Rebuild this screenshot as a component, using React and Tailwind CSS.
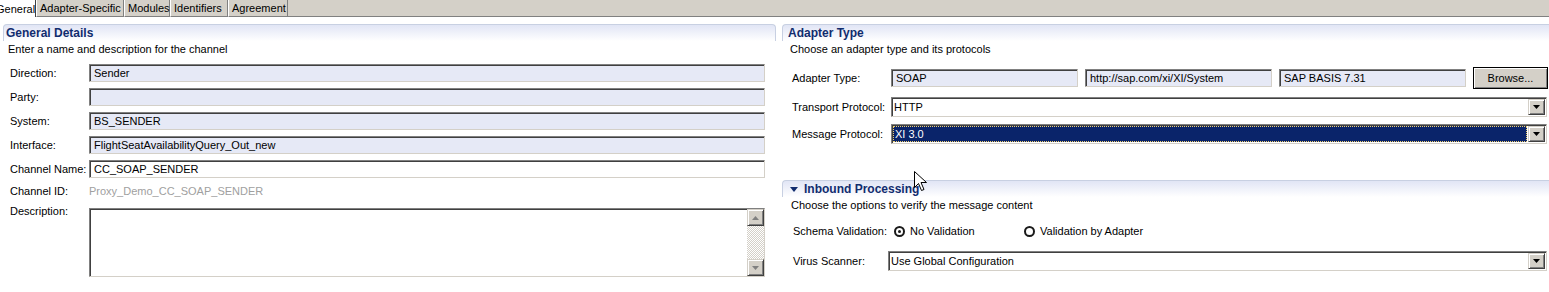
import React from "react";

const sunken =
  "border-t border-l border-b border-r border-t-[#808080] border-l-[#808080] border-b-[#d4d0c8] border-r-[#d4d0c8] shadow-[inset_1px_1px_0_#404040]";

function Field({ children, white, className = "" }) {
  return (
    <div
      className={`${sunken} flex items-center pl-[4px] overflow-hidden whitespace-nowrap ${
        white ? "bg-white" : "bg-[#e6e9f6]"
      } ${className}`}
    >
      {children}
    </div>
  );
}

function DropBtn() {
  return (
    <div className="w-[17px] h-[16px] shrink-0 bg-[#d4d0c8] border border-t-[#d4d0c8] border-l-[#d4d0c8] border-b-[#404040] border-r-[#404040] shadow-[inset_1px_1px_0_#ffffff,inset_-1px_-1px_0_#808080] flex items-center justify-center">
      <svg width="7" height="4" viewBox="0 0 7 4">
        <path d="M0 0h7L3.5 4z" fill="#000" />
      </svg>
    </div>
  );
}

function Select({ children, className = "", focused }) {
  return (
    <div className={`${sunken} bg-white flex items-center h-[20px] pr-[1px] ${className}`}>
      {focused ? (
        <div className="flex-1 h-full p-[1px]">
          <div className="h-full bg-[#0a246a] text-white outline-1 outline-dotted outline-[#f0d070] -outline-offset-1 flex items-center pl-[2px] whitespace-nowrap">
            {children}
          </div>
        </div>
      ) : (
        <div className="flex-1 pl-[2px] whitespace-nowrap">{children}</div>
      )}
      <DropBtn />
    </div>
  );
}

function SectionHeader({ children, className = "" }) {
  return (
    <div
      className={`h-[17px] rounded-t-[4px] border-t border-x border-[#c8d0e2] bg-linear-to-b from-[#e1e5f5] to-white flex items-center font-bold text-[#112c6e] text-[12px] ${className}`}
    >
      {children}
    </div>
  );
}

function ScrollBtn({ up }) {
  return (
    <div className="w-[17px] h-[17px] bg-[#d4d0c8] border border-t-[#d4d0c8] border-l-[#d4d0c8] border-b-[#404040] border-r-[#404040] shadow-[inset_1px_1px_0_#ffffff,inset_-1px_-1px_0_#808080] flex items-center justify-center">
      <svg width="7" height="4" viewBox="0 0 7 4">
        {up ? <path d="M3.5 0L7 4H0z" fill="#808080" /> : <path d="M0 0h7L3.5 4z" fill="#808080" />}
      </svg>
    </div>
  );
}

function Radio({ checked }) {
  return (
    <div className="w-[11px] h-[11px] rounded-full border-2 border-[#1a1a1a] bg-white flex items-center justify-center shrink-0">
      {checked && <div className="w-[3px] h-[3px] rounded-full bg-[#1a1a1a]" />}
    </div>
  );
}

function Row({ label, children }) {
  return (
    <div className="flex items-center h-[18px]">
      <div className="w-[79px] shrink-0">{label}</div>
      {children}
    </div>
  );
}

export default function App() {
  const tabs = [
    { t: "Adapter-Specific", w: "w-[88px]" },
    { t: "Modules", w: "w-[46px]" },
    { t: "Identifiers", w: "w-[58px]" },
    { t: "Agreement", w: "w-[60px]" },
  ];
  return (
    <div className="relative w-[1549px] h-[292px] bg-white overflow-hidden text-[11px] leading-[14px] text-black font-['Liberation_Sans',Arial,sans-serif]">
      {/* Tab bar */}
      <div className="flex h-[17px] bg-[#d4d0c8]">
        <div className="w-[37px] h-[17px] bg-white border-r border-r-[#404040] flex items-center -ml-[1px] pl-0 whitespace-nowrap overflow-hidden">
          <span className="-ml-[3px]">General</span>
        </div>
        {tabs.map((tb) => (
          <div
            key={tb.t}
            className={`${tb.w} h-[17px] border-l border-l-white border-r border-r-[#808080] border-b border-b-[#808080] flex items-center pl-[3px] whitespace-nowrap`}
          >
            {tb.t}
          </div>
        ))}
        <div className="flex-1 border-b border-b-[#808080]" />
      </div>

      <div className="flex pt-[7px]">
        {/* Left column */}
        <div className="w-[773px] ml-[3px] shrink-0">
          <SectionHeader className="pl-[2px]">General Details</SectionHeader>
          <div className="pl-[5px] h-[16px] leading-[16px]">Enter a name and description for the channel</div>
          <div className="pl-[7px] mt-[7px] flex flex-col">
            <div className="flex flex-col gap-[6px]">
              <Row label="Direction:">
                <Field className="w-[676px] h-[18px]">Sender</Field>
              </Row>
              <Row label="Party:">
                <Field className="w-[676px] h-[18px]" />
              </Row>
              <Row label="System:">
                <Field className="w-[676px] h-[18px]">BS_SENDER</Field>
              </Row>
              <Row label="Interface:">
                <Field className="w-[676px] h-[18px]">FlightSeatAvailabilityQuery_Out_new</Field>
              </Row>
              <Row label="Channel Name:">
                <Field white className="w-[676px] h-[18px]">CC_SOAP_SENDER</Field>
              </Row>
            </div>
            <div className="flex items-center h-[18px] mt-[4px]">
              <div className="w-[79px] shrink-0">Channel ID:</div>
              <div className="text-[#a0a0a0]">Proxy_Demo_CC_SOAP_SENDER</div>
            </div>
            <div className="flex items-start mt-[4px]">
              <div className="w-[79px] shrink-0">Description:</div>
              <div className={`${sunken} bg-white w-[676px] h-[69px] mt-[4px] flex justify-end`}>
                <div className="w-[17px] h-full flex flex-col justify-between bg-[repeating-conic-gradient(#d4d0c8_0_25%,#ffffff_0_50%)] bg-[length:2px_2px]">
                  <ScrollBtn up />
                  <ScrollBtn />
                </div>
              </div>
            </div>
          </div>
        </div>

        {/* Right column */}
        <div className="ml-[6px] w-[767px] shrink-0">
          <SectionHeader className="pl-[5px] rounded-tr-none border-r-0">Adapter Type</SectionHeader>
          <div className="pl-[8px] h-[16px] leading-[16px]">Choose an adapter type and its protocols</div>
          <div className="pl-[10px] mt-[10px] flex items-center h-[22px]">
            <div className="w-[99px] shrink-0">Adapter Type:</div>
            <div className="flex items-center gap-[7px]">
              <Field className="w-[187px] h-[18px]">SOAP</Field>
              <Field className="w-[187px] h-[18px]">http://sap.com/xi/XI/System</Field>
              <Field className="w-[187px] h-[18px]">SAP BASIS 7.31</Field>
              <div className="w-[75px] h-[22px] border border-black bg-[#d4d0c8] shadow-[inset_1px_1px_0_#ffffff,inset_-1px_-1px_0_#808080] flex items-center justify-center">
                Browse...
              </div>
            </div>
          </div>
          <div className="pl-[10px] mt-[8px] flex items-center">
            <div className="w-[99px] shrink-0">Transport Protocol:</div>
            <Select className="w-[656px]">HTTP</Select>
          </div>
          <div className="pl-[10px] mt-[7px] flex items-center">
            <div className="w-[99px] shrink-0">Message Protocol:</div>
            <Select focused className="w-[656px]">XI 3.0</Select>
          </div>

          <SectionHeader className="mt-[36px] pl-[7px] gap-[6px] rounded-tr-none border-r-0">
            <svg width="8" height="5" viewBox="0 0 8 5">
              <path d="M0 0h8L4 5z" fill="#112c6e" />
            </svg>
            Inbound Processing
          </SectionHeader>
          <div className="pl-[9px] h-[16px] leading-[16px]">Choose the options to verify the message content</div>
          <div className="pl-[11px] mt-[9px] flex items-center h-[18px]">
            <div className="w-[101px] shrink-0">Schema Validation:</div>
            <div className="w-[130px] flex items-center gap-[5px]">
              <Radio checked />
              <span>No Validation</span>
            </div>
            <div className="flex items-center gap-[5px]">
              <Radio />
              <span>Validation by Adapter</span>
            </div>
          </div>
          <div className="pl-[11px] mt-[11px] flex items-center">
            <div className="w-[95px] shrink-0">Virus Scanner:</div>
            <Select className="w-[659px] h-[19px]">Use Global Configuration</Select>
          </div>
        </div>
      </div>

      {/* Mouse cursor */}
      <svg className="absolute left-[914px] top-[171px]" width="13" height="21" viewBox="0 0 13 21">
        <path
          d="M0.5 0.5V16.5L4.5 12.5L7.5 19.5L10 18.5L7 11.5H12.5Z"
          fill="#ffffff"
          stroke="#000000"
          strokeWidth="1"
          strokeLinejoin="miter"
        />
      </svg>
    </div>
  );
}
